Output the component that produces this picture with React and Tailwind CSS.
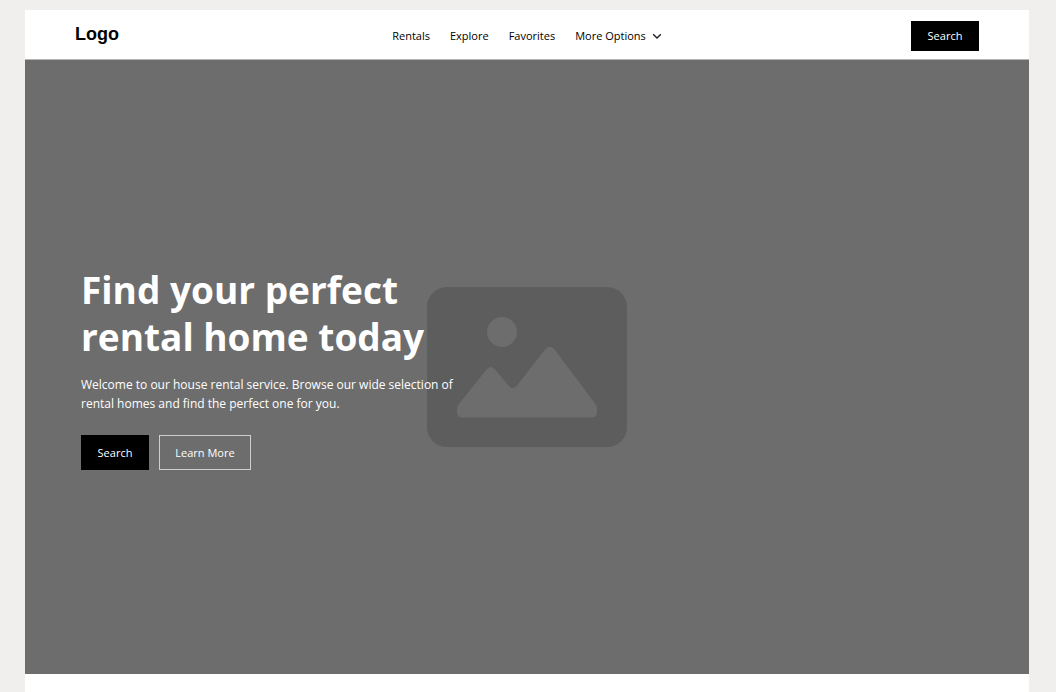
import React from "react";

const links = ["Rentals", "Explore", "Favorites"];

function Logo() {
  return (
    <a
      href="#home"
      className="font-['Liberation_Sans',sans-serif] text-[18px] leading-6 font-bold text-black"
    >
      Logo
    </a>
  );
}

function Header() {
  return (
    <header className="grid grid-cols-[1fr_auto_1fr] items-center border-b border-[#b4b4b4] bg-white px-[50px] pt-[11px] pb-2">
      <div className="flex items-center pb-1">
        <Logo />
      </div>
      <nav aria-label="Main" className="flex items-center gap-5 text-[11px] leading-4 text-black">
        {links.map((label) => (
          <a key={label} href={"#" + label.toLowerCase()}>
            {label}
          </a>
        ))}
        <button type="button" className="flex items-center gap-[6px]">
          More Options
          <svg viewBox="0 0 10 10" className="size-[10px]" fill="none" stroke="#222" strokeWidth="1.4" aria-hidden="true">
            <path d="M1.2 3.2 5 7l3.8-3.8" />
          </svg>
        </button>
      </nav>
      <button type="button" className="h-[30px] w-[68px] justify-self-end bg-black text-[11px] leading-4 text-white">
        Search
      </button>
    </header>
  );
}

function ImagePlaceholder() {
  return (
    <svg
      viewBox="0 0 200 160"
      className="absolute top-1/2 left-1/2 h-[160px] w-[200px] -translate-x-1/2 -translate-y-1/2"
      aria-hidden="true"
    >
      <rect width="200" height="160" rx="20" fill="#5d5d5d" />
      <circle cx="75" cy="45" r="15" fill="#6d6d6d" />
      <path
        d="M30 122Q30 119.500 31.500 117.500L59.500 82.500Q63.700 77.300 68 82.500L81.500 98.500Q85.700 103.500 90 98.500L118 62.500Q122.700 57 127.500 62.500L168.500 117Q170 119 170 121.500V125Q170 130.500 164.500 130.500H35.500Q30 130.500 30 125Z"
        fill="#6d6d6d"
      />
    </svg>
  );
}

function Hero() {
  return (
    <section className="relative flex h-[614px] items-center bg-[#6d6d6d] px-14 text-white">
      <ImagePlaceholder />
      <div className="relative max-w-[400px] pt-0.5">
        <h1 className="text-[37px] leading-[47px] font-bold">
          Find your perfect
          <br />
          rental home today
        </h1>
        <p className="mt-[15px] text-[12px] leading-[19px]">
          Welcome to our house rental service. Browse our wide selection of
          <br />
          rental homes and find the perfect one for you.
        </p>
        <div className="mt-[22px] flex gap-[10px] text-[11px] leading-4">
          <button type="button" className="h-[35px] w-[68px] bg-black">
            Search
          </button>
          <button type="button" className="h-[35px] w-[92px] border border-[#cfcfcf]">
            Learn More
          </button>
        </div>
      </div>
    </section>
  );
}

export default function App() {
  return (
    <div className="min-h-screen bg-[#f0efed] pt-[10px] pr-[27px] pl-[25px] font-['Open_Sans','Noto_Sans',sans-serif]">
      <main className="bg-white pb-[18px]">
        <Header />
        <Hero />
      </main>
    </div>
  );
}
